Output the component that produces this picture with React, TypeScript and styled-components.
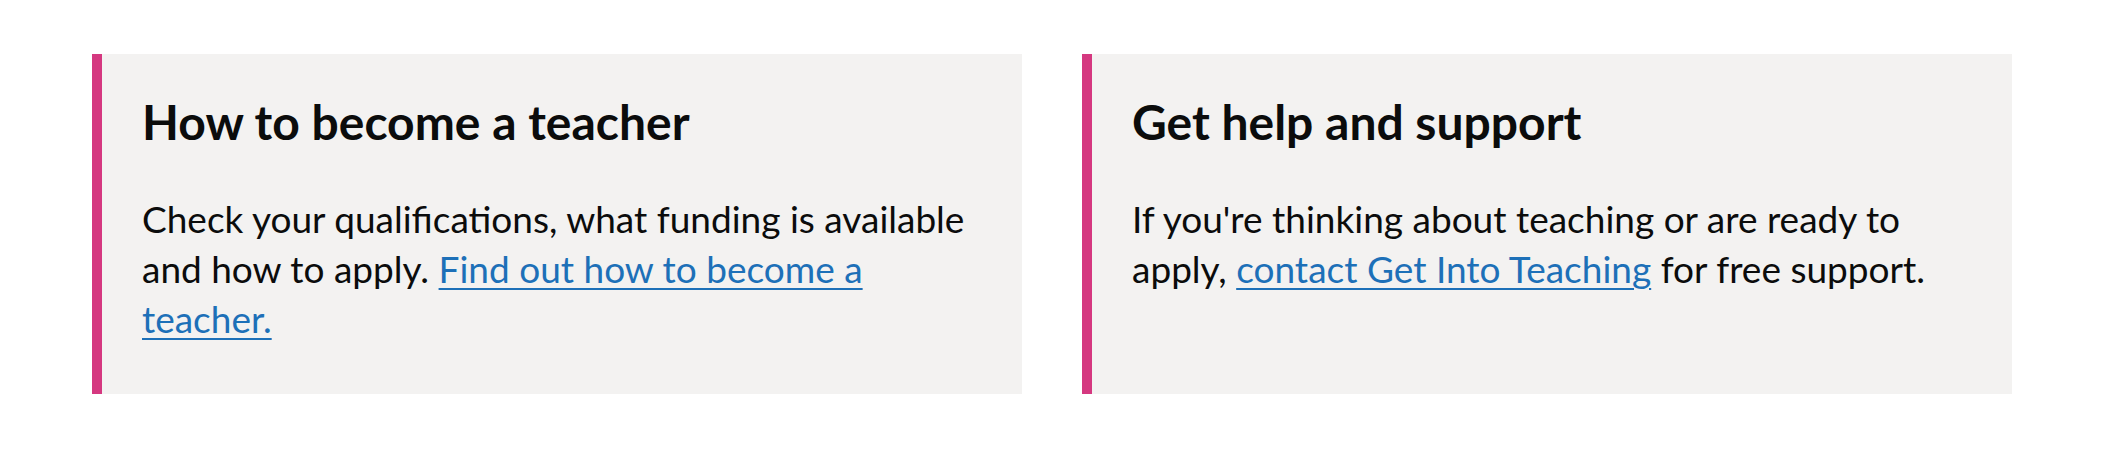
import React from "react";
import styled, { createGlobalStyle } from "styled-components";

const GlobalStyle = createGlobalStyle`
  html, body { margin: 0; padding: 0; background: #ffffff; }
  body {
    font-family: "Lato", "Noto Sans", sans-serif;
    color: #0b0c0c;
    -webkit-font-smoothing: antialiased;
  }
`;

const Page = styled.main`
  display: grid;
  grid-template-columns: 1fr 1fr;
  gap: 60px;
  padding: 54px 92px;
`;

const Card = styled.section`
  background: #f3f2f1;
  border-left: 10px solid #d53880;
  padding: 38px 40px 50px 40px;
`;

const Heading = styled.h2`
  margin: 0 0 42px 0;
  font-family: "Lato", "Noto Sans", sans-serif;
  font-weight: 700;
  font-size: 48px;
  line-height: 60px;
  color: #0b0c0c;
`;

const Body = styled.p`
  margin: 0;
  font-family: "Lato", "Noto Sans", sans-serif;
  font-weight: 400;
  font-size: 37px;
  line-height: 50px;
  color: #0b0c0c;
`;

const Link = styled.a`
  color: #1d70b8;
  text-decoration: underline;
  text-decoration-thickness: 2px;
  text-underline-offset: 5px;
`;

export default function App() {
  return (
    <>
      <GlobalStyle />
      <Page>
        <Card>
          <Heading>How to become a teacher</Heading>
          <Body>
            Check your qualifications, what funding is available and how to apply.{" "}
            <Link href="#">Find out how to become a teacher.</Link>
          </Body>
        </Card>
        <Card>
          <Heading>Get help and support</Heading>
          <Body>
            If you're thinking about teaching or are ready to apply,{" "}
            <Link href="#">contact Get Into Teaching</Link> for free support.
          </Body>
        </Card>
      </Page>
    </>
  );
}
